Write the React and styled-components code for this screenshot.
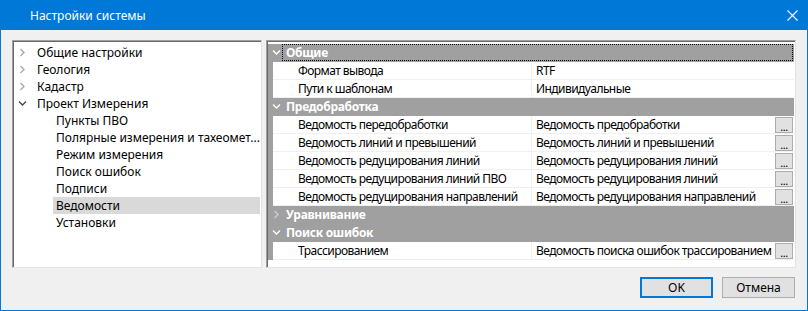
import styled, { createGlobalStyle } from 'styled-components';

const GlobalStyle = createGlobalStyle`
	html, body {
		margin: 0;
		padding: 0;
		background: #ffffff;
	}
	body {
		font-family: 'Noto Sans', 'Liberation Sans', sans-serif;
		font-size: 12px;
		color: #000;
	}
	* {
		box-sizing: border-box;
	}
`;

const treeItems = [
	{ label: 'Общие настройки', level: 0, state: 'closed' },
	{ label: 'Геология', level: 0, state: 'closed' },
	{ label: 'Кадастр', level: 0, state: 'closed' },
	{ label: 'Проект Измерения', level: 0, state: 'open' },
	{ label: 'Пункты ПВО', level: 1 },
	{ label: 'Полярные измерения и тахеомет...', level: 1 },
	{ label: 'Режим измерения', level: 1 },
	{ label: 'Поиск ошибок', level: 1 },
	{ label: 'Подписи', level: 1 },
	{ label: 'Ведомости', level: 1, selected: true },
	{ label: 'Установки', level: 1 }
];

const gridRows = [
	{ type: 'cat', label: 'Общие', open: true, focused: true },
	{ label: 'Формат вывода', value: 'RTF' },
	{ label: 'Пути к шаблонам', value: 'Индивидуальные' },
	{ type: 'cat', label: 'Предобработка', open: true },
	{ label: 'Ведомость передобработки', value: 'Ведомость предобработки', button: true },
	{ label: 'Ведомость линий и превышений', value: 'Ведомость линий и превышений', button: true },
	{ label: 'Ведомость редуцирования линий', value: 'Ведомость редуцирования линий', button: true },
	{ label: 'Ведомость редуцирования линий ПВО', value: 'Ведомость редуцирования линий', button: true },
	{ label: 'Ведомость редуцирования направлений', value: 'Ведомость редуцирования направлений', button: true },
	{ type: 'cat', label: 'Уравнивание', open: false },
	{ type: 'cat', label: 'Поиск ошибок', open: true },
	{ label: 'Трассированием', value: 'Ведомость поиска ошибок трассированием', button: true }
];

const Chevron = ({ open, color }) => (
	<svg width="9" height="9" viewBox="0 0 9 9">
		{open ? (
			<polyline points="1,2.5 4.5,6 8,2.5" fill="none" stroke={color} strokeWidth="1.3" />
		) : (
			<polyline points="2.5,1 6,4.5 2.5,8" fill="none" stroke={color} strokeWidth="1.3" />
		)}
	</svg>
);

const App = () => {
	return (
		<>
			<GlobalStyle />
			<Window>
				<TitleBar>
					<Title>Настройки системы</Title>
					<CloseIcon width="11" height="11" viewBox="0 0 11 11">
						<path d="M0.5 0.5 L10.5 10.5 M10.5 0.5 L0.5 10.5" stroke="#fff" strokeWidth="1.1" />
					</CloseIcon>
				</TitleBar>
				<Body>
					<Panels>
						<Tree>
							{treeItems.map((item, i) => (
								<TreeRow key={i} level={item.level}>
									{item.level === 0 && (
										<Expander>
											<Chevron open={item.state === 'open'} color={item.state === 'open' ? '#404040' : '#a6a6a6'} />
										</Expander>
									)}
									<TreeLabel selected={item.selected}>{item.label}</TreeLabel>
								</TreeRow>
							))}
						</Tree>
						<Grid>
							{gridRows.map((row, i) =>
								row.type === 'cat' ? (
									<CategoryRow key={i}>
										<CatExpander>
											<Chevron open={row.open} color={row.open ? '#ffffff' : '#d0d0d0'} />
										</CatExpander>
										<CatLabel focused={row.focused}>{row.label}</CatLabel>
									</CategoryRow>
								) : (
									<PropRow key={i}>
										<Margin />
										<NameCell>{row.label}</NameCell>
										<ValueCell>
											<ValueText>{row.value}</ValueText>
											{row.button && <DotsButton>...</DotsButton>}
										</ValueCell>
									</PropRow>
								)
							)}
						</Grid>
					</Panels>
					<Footer>
						<Button primary>OK</Button>
						<Button>Отмена</Button>
					</Footer>
				</Body>
			</Window>
		</>
	);
};

const Window = styled.div`
	width: 808px;
	height: 311px;
	border: 1px solid #0078d7;
	border-top: none;
	background: #f0f0f0;
	display: flex;
	flex-direction: column;
`;

const TitleBar = styled.div`
	height: 30px;
	background: #0078d7;
	display: flex;
	align-items: center;
	justify-content: space-between;
	padding: 0 10px 0 30px;
	margin: 0 -1px;
`;

const Title = styled.span`
	color: #ffffff;
	font-size: 12px;
	margin-top: 1px;
`;

const CloseIcon = styled.svg`
	display: block;
`;

const Body = styled.div`
	flex: 1;
	display: flex;
	flex-direction: column;
	padding: 10px 11px 12px 11px;
`;

const Panels = styled.div`
	display: flex;
	gap: 4px;
	height: 228px;
`;

const Sunken = styled.div`
	background: #ffffff;
	border: 1px solid;
	border-color: #a0a0a0 #e3e3e3 #e3e3e3 #a0a0a0;
	box-shadow: inset 1px 1px 0 #696969;
`;

const Tree = styled(Sunken)`
	width: 250px;
	padding: 3px 1px 0 2px;
	display: flex;
	flex-direction: column;
`;

const TreeRow = styled.div`
	height: 17px;
	display: flex;
	align-items: center;
	padding-left: ${(p) => (p.level === 0 ? '3px' : '41px')};
`;

const Expander = styled.span`
	width: 19px;
	display: flex;
	align-items: center;
	justify-content: flex-start;
`;

const TreeLabel = styled.span`
	flex: 1;
	height: 17px;
	line-height: 17px;
	padding-left: 3px;
	margin-left: -3px;
	background: ${(p) => (p.selected ? '#d9d9d9' : 'transparent')};
	white-space: nowrap;
`;

const Grid = styled(Sunken)`
	flex: 1;
	padding: 3px 1px 0 1px;
	display: flex;
	flex-direction: column;
	letter-spacing: -0.55px;
`;

const CategoryRow = styled.div`
	height: 18px;
	background: #a0a0a0;
	display: flex;
	align-items: center;
	border-bottom: 1px solid #a0a0a0;
`;

const CatExpander = styled.span`
	width: 14px;
	display: flex;
	align-items: center;
	justify-content: center;
	padding-left: 2px;
`;

const CatLabel = styled.span`
	flex: 1;
	color: #ffffff;
	font-weight: bold;
	height: 17px;
	line-height: 16px;
	padding-left: 3px;
	border: 1px dotted ${(p) => (p.focused ? '#000' : 'transparent')};
	margin-right: 1px;
	letter-spacing: -0.3px;
`;

const PropRow = styled.div`
	height: 18px;
	display: flex;
	border-bottom: 1px solid #f0f0f0;
`;

const Margin = styled.span`
	width: 5px;
	background: #a0a0a0;
	margin-bottom: -1px;
`;

const NameCell = styled.span`
	width: 259px;
	padding-left: 25px;
	line-height: 17px;
	border-right: 1px solid #f0f0f0;
	white-space: nowrap;
	overflow: hidden;
`;

const ValueCell = styled.span`
	flex: 1;
	display: flex;
	align-items: center;
	min-width: 0;
	padding-left: 4px;
	padding-right: 1px;
`;

const ValueText = styled.span`
	flex: 1;
	white-space: nowrap;
	overflow: hidden;
	line-height: 17px;
`;

const DotsButton = styled.span`
	width: 18px;
	height: 16px;
	background: #e1e1e1;
	border: 1px solid #adadad;
	font-size: 11px;
	line-height: 18px;
	text-align: center;
	letter-spacing: -0.5px;
`;

const Footer = styled.div`
	display: flex;
	justify-content: flex-end;
	gap: 9px;
	margin-top: 9px;
	padding-right: 1px;
`;

const Button = styled.div`
	width: 73px;
	height: 21px;
	display: flex;
	align-items: center;
	justify-content: center;
	background: #e1e1e1;
	border: ${(p) => (p.primary ? '2px solid #0078d7' : '1px solid #adadad')};
`;

export default App;
